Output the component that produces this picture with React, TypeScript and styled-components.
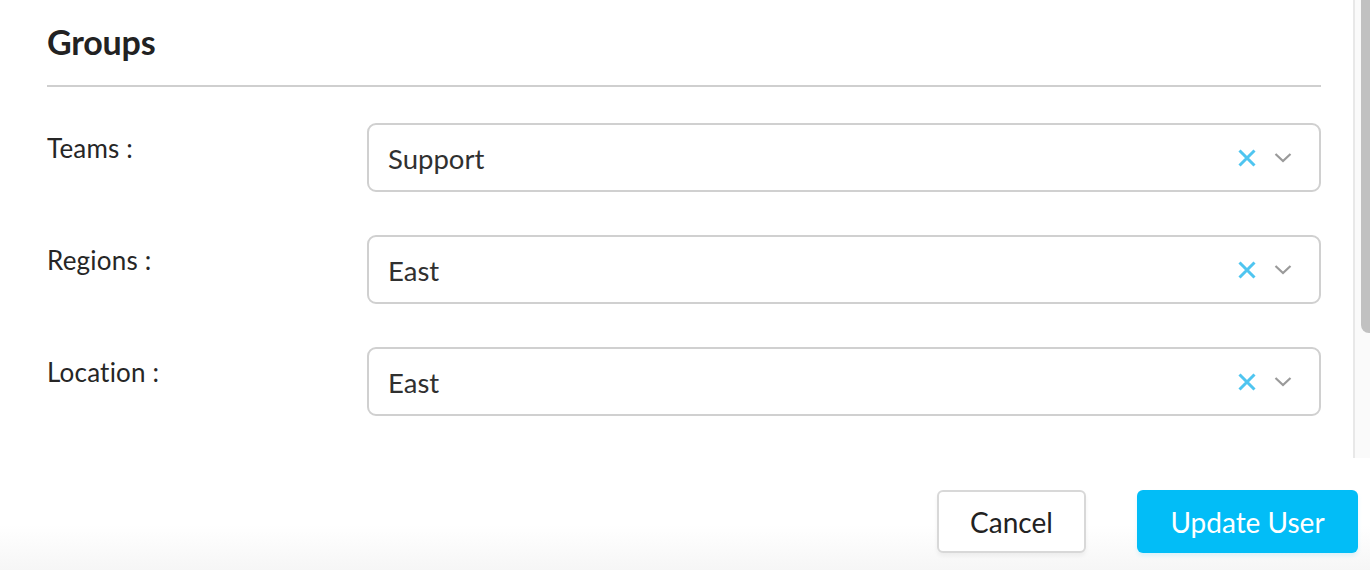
import React from "react";
import styled, { createGlobalStyle } from "styled-components";

const GlobalStyle = createGlobalStyle`
    html, body {
        margin: 0;
        padding: 0;
        background: #ffffff;
        overflow: hidden;
    }
    * {
        box-sizing: border-box;
    }
`

const Modal = styled.div`
    width: 1370px;
    height: 570px;
    display: flex;
    flex-direction: column;
    font-family: Lato, "Open Sans", sans-serif;
    color: #222222;
    background: #ffffff;
`

const Body = styled.div`
    height: 458px;
    display: flex;
    flex-shrink: 0;
`

const Content = styled.div`
    flex: 1;
    overflow: hidden;
    padding: 19px 32px 0 47px;
`

const ScrollTrack = styled.div`
    width: 17px;
    flex-shrink: 0;
    background: #fafafa;
    border-left: 2px solid #e8e8e8;
    display: flex;
    justify-content: flex-end;
`

const ScrollThumb = styled.div`
    width: 9px;
    height: 333px;
    background: #c1c1c1;
    border-radius: 0 0 0 8px;
`

const Title = styled.h2`
    margin: 0;
    font-size: 34px;
    font-weight: 700;
    line-height: 46px;
    color: #222222;
    letter-spacing: -0.2px;
`

const Divider = styled.hr`
    margin: 20px 0 37px;
    border: 0;
    height: 2px;
    background: #cfcfcf;
`

const Form = styled.div`
    display: flex;
    flex-direction: column;
    gap: 44px;
`

const Row = styled.div`
    display: grid;
    grid-template-columns: 320px 1fr;
    align-items: start;
`

const Label = styled.label`
    font-size: 26px;
    line-height: 30px;
    padding-top: 9px;
    color: #262626;
    letter-spacing: 0.2px;
`

const SelectBox = styled.div`
    height: 69px;
    margin-top: -1px;
    border: 2px solid #d0d0d0;
    border-radius: 9px;
    display: flex;
    align-items: center;
    padding: 0 27px 0 19px;
    background: #ffffff;
`

const SelectValue = styled.span`
    flex: 1;
    font-size: 27.5px;
    color: #303030;
    padding-top: 2px;
`

const Indicators = styled.div`
    display: flex;
    align-items: center;
    gap: 18px;
`

const IconSvg = styled.svg`
    display: block;
`

const Footer = styled.div`
    flex: 1;
    display: flex;
    justify-content: flex-end;
    align-items: flex-start;
    gap: 51px;
    padding: 32px 12px 0 0;
    background: linear-gradient(to bottom, #ffffff 0%, #ffffff 60%, #f6f6f6 100%);
`

const Button = styled.button<{ $primary?: boolean }>`
    height: 63px;
    padding: 0;
    width: ${({ $primary }) => ($primary ? "221px" : "149px")};
    font-family: Lato, "Open Sans", sans-serif;
    font-size: 28px;
    border-radius: 6px;
    cursor: pointer;
    border: ${({ $primary }) => ($primary ? "0" : "2px solid #d8d8d8")};
    background: ${({ $primary }) => ($primary ? "#02bdf7" : "#ffffff")};
    color: ${({ $primary }) => ($primary ? "#ffffff" : "#222222")};
    box-shadow: ${({ $primary }) =>
        $primary ? "0 3px 4px rgba(2, 189, 247, 0.12)" : "0 3px 4px rgba(0, 0, 0, 0.05)"};
`

const fields = [
    { label: "Teams", value: "Support" },
    { label: "Regions", value: "East" },
    { label: "Location", value: "East" },
];

function ClearIcon() {
    return (
        <IconSvg width="18" height="18" viewBox="0 0 18 18">
            <path d="M1.5 1.5L16.5 16.5M16.5 1.5L1.5 16.5" stroke="#4fc5f0" strokeWidth="3" fill="none" />
        </IconSvg>
    )
}

function ChevronIcon() {
    return (
        <IconSvg width="18" height="18" viewBox="0 0 18 18">
            <path d="M1.5 5L9 12L16.5 5" stroke="#9a9a9a" strokeWidth="2.2" fill="none" />
        </IconSvg>
    )
}

export default function App() {
    return (
        <Modal>
            <GlobalStyle />
            <Body>
                <Content>
                    <Title>Groups</Title>
                    <Divider />
                    <Form>
                        {fields.map(f => (
                            <Row key={f.label}>
                                <Label>{f.label} :</Label>
                                <SelectBox>
                                    <SelectValue>{f.value}</SelectValue>
                                    <Indicators>
                                        <ClearIcon />
                                        <ChevronIcon />
                                    </Indicators>
                                </SelectBox>
                            </Row>
                        ))}
                    </Form>
                </Content>
                <ScrollTrack>
                    <ScrollThumb />
                </ScrollTrack>
            </Body>
            <Footer>
                <Button>Cancel</Button>
                <Button $primary>Update User</Button>
            </Footer>
        </Modal>
    )
}
